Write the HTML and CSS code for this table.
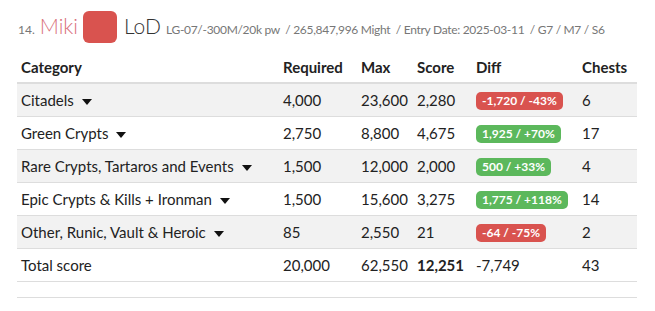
FILE: index.html
```html
<!DOCTYPE html>
<html>
<head>
<meta charset="utf-8">
<link rel="stylesheet" href="styles.css">
</head>
<body>
<div class="page">
  <h3 class="title">
    <span class="rank">14.</span>
    <span class="name">Miki</span>
    <span class="avatar"></span>
    <span class="guild">LoD</span>
    <span class="meta">LG-07/-300M/20k pw &nbsp;/ 265,847,996 Might &nbsp;/ Entry Date: 2025-03-11 &nbsp;/ G7 / M7 / S6</span>
  </h3>
  <table class="scores">
    <colgroup>
      <col class="c-cat"><col class="c-req"><col class="c-max"><col class="c-score"><col class="c-diff"><col class="c-chests">
    </colgroup>
    <thead>
      <tr><th>Category</th><th>Required</th><th>Max</th><th>Score</th><th>Diff</th><th>Chests</th></tr>
    </thead>
    <tbody>
      <tr class="odd"><td>Citadels <span class="caret"></span></td><td>4,000</td><td>23,600</td><td>2,280</td><td><span class="badge bad">-1,720 / -43%</span></td><td>6</td></tr>
      <tr><td>Green Crypts <span class="caret"></span></td><td>2,750</td><td>8,800</td><td>4,675</td><td><span class="badge good">1,925 / +70%</span></td><td>17</td></tr>
      <tr class="odd"><td>Rare Crypts, Tartaros and Events <span class="caret"></span></td><td>1,500</td><td>12,000</td><td>2,000</td><td><span class="badge good">500 / +33%</span></td><td>4</td></tr>
      <tr><td>Epic Crypts &amp; Kills + Ironman <span class="caret"></span></td><td>1,500</td><td>15,600</td><td>3,275</td><td><span class="badge good">1,775 / +118%</span></td><td>14</td></tr>
      <tr class="odd"><td>Other, Runic, Vault &amp; Heroic <span class="caret"></span></td><td>85</td><td>2,550</td><td>21</td><td><span class="badge bad">-64 / -75%</span></td><td>2</td></tr>
      <tr><td>Total score</td><td>20,000</td><td>62,550</td><td><strong>12,251</strong></td><td>-7,749</td><td>43</td></tr>
      <tr class="empty"><td colspan="6"></td></tr>
    </tbody>
  </table>
</div>
</body>
</html>
```
FILE: styles.css
```css
html, body {
  margin: 0;
  padding: 0;
  background: #fff;
}
body {
  font-family: "Lato", "Noto Sans", sans-serif;
  color: #222;
}
.page {
  padding: 9px 17px 0 17px;
  width: 620px;
}
.title {
  margin: 0;
  display: flex;
  align-items: baseline;
  font-weight: 300;
  height: 34px;
  white-space: nowrap;
}
.rank {
  font-size: 12px;
  color: #777;
  margin-left: 1px;
  margin-right: 5px;
  font-weight: 400;
}
.name {
  font-size: 21px;
  color: #d9707a;
  margin-right: 5px;
  line-height: 34px;
}
.avatar {
  flex: none;
  align-self: center;
  width: 34px;
  height: 32px;
  border-radius: 6px;
  background: #d9534f;
  margin-right: 7px;
  margin-top: 2px;
}
.guild {
  font-size: 21px;
  color: #333;
  margin-right: 5px;
}
.meta {
  font-size: 12px;
  letter-spacing: -0.3px;
  color: #777;
  font-weight: 400;
}
.scores {
  margin-top: 12px;
  width: 620px;
  border-collapse: collapse;
  table-layout: fixed;
  font-size: 15px;
}
.c-cat { width: 262px; }
.c-req { width: 78px; }
.c-max { width: 56px; }
.c-score { width: 59px; }
.c-diff { width: 106px; }
.c-chests { width: 59px; }
th {
  text-align: left;
  font-weight: 700;
  padding: 0 4px 6px;
  height: 21px;
  vertical-align: bottom;
  border-bottom: 2px solid #ddd;
}
td {
  padding: 0 4px;
  height: 32px;
  border-bottom: 1px solid #ddd;
  white-space: nowrap;
}
tr.odd td {
  background: #f2f2f2;
}
tr.empty td {
  height: 15px;
}
.caret {
  display: inline-block;
  width: 0;
  height: 0;
  border-left: 5px solid transparent;
  border-right: 5px solid transparent;
  border-top: 6px solid #111;
  vertical-align: middle;
  margin-left: 4px;
}
.badge {
  display: inline-block;
  color: #fff;
  font-size: 12px;
  font-weight: 700;
  padding: 2px 6px;
  border-radius: 5px;
  line-height: 14px;
}
.bad { background: #d9534f; }
.good { background: #5cb85c; }
```
